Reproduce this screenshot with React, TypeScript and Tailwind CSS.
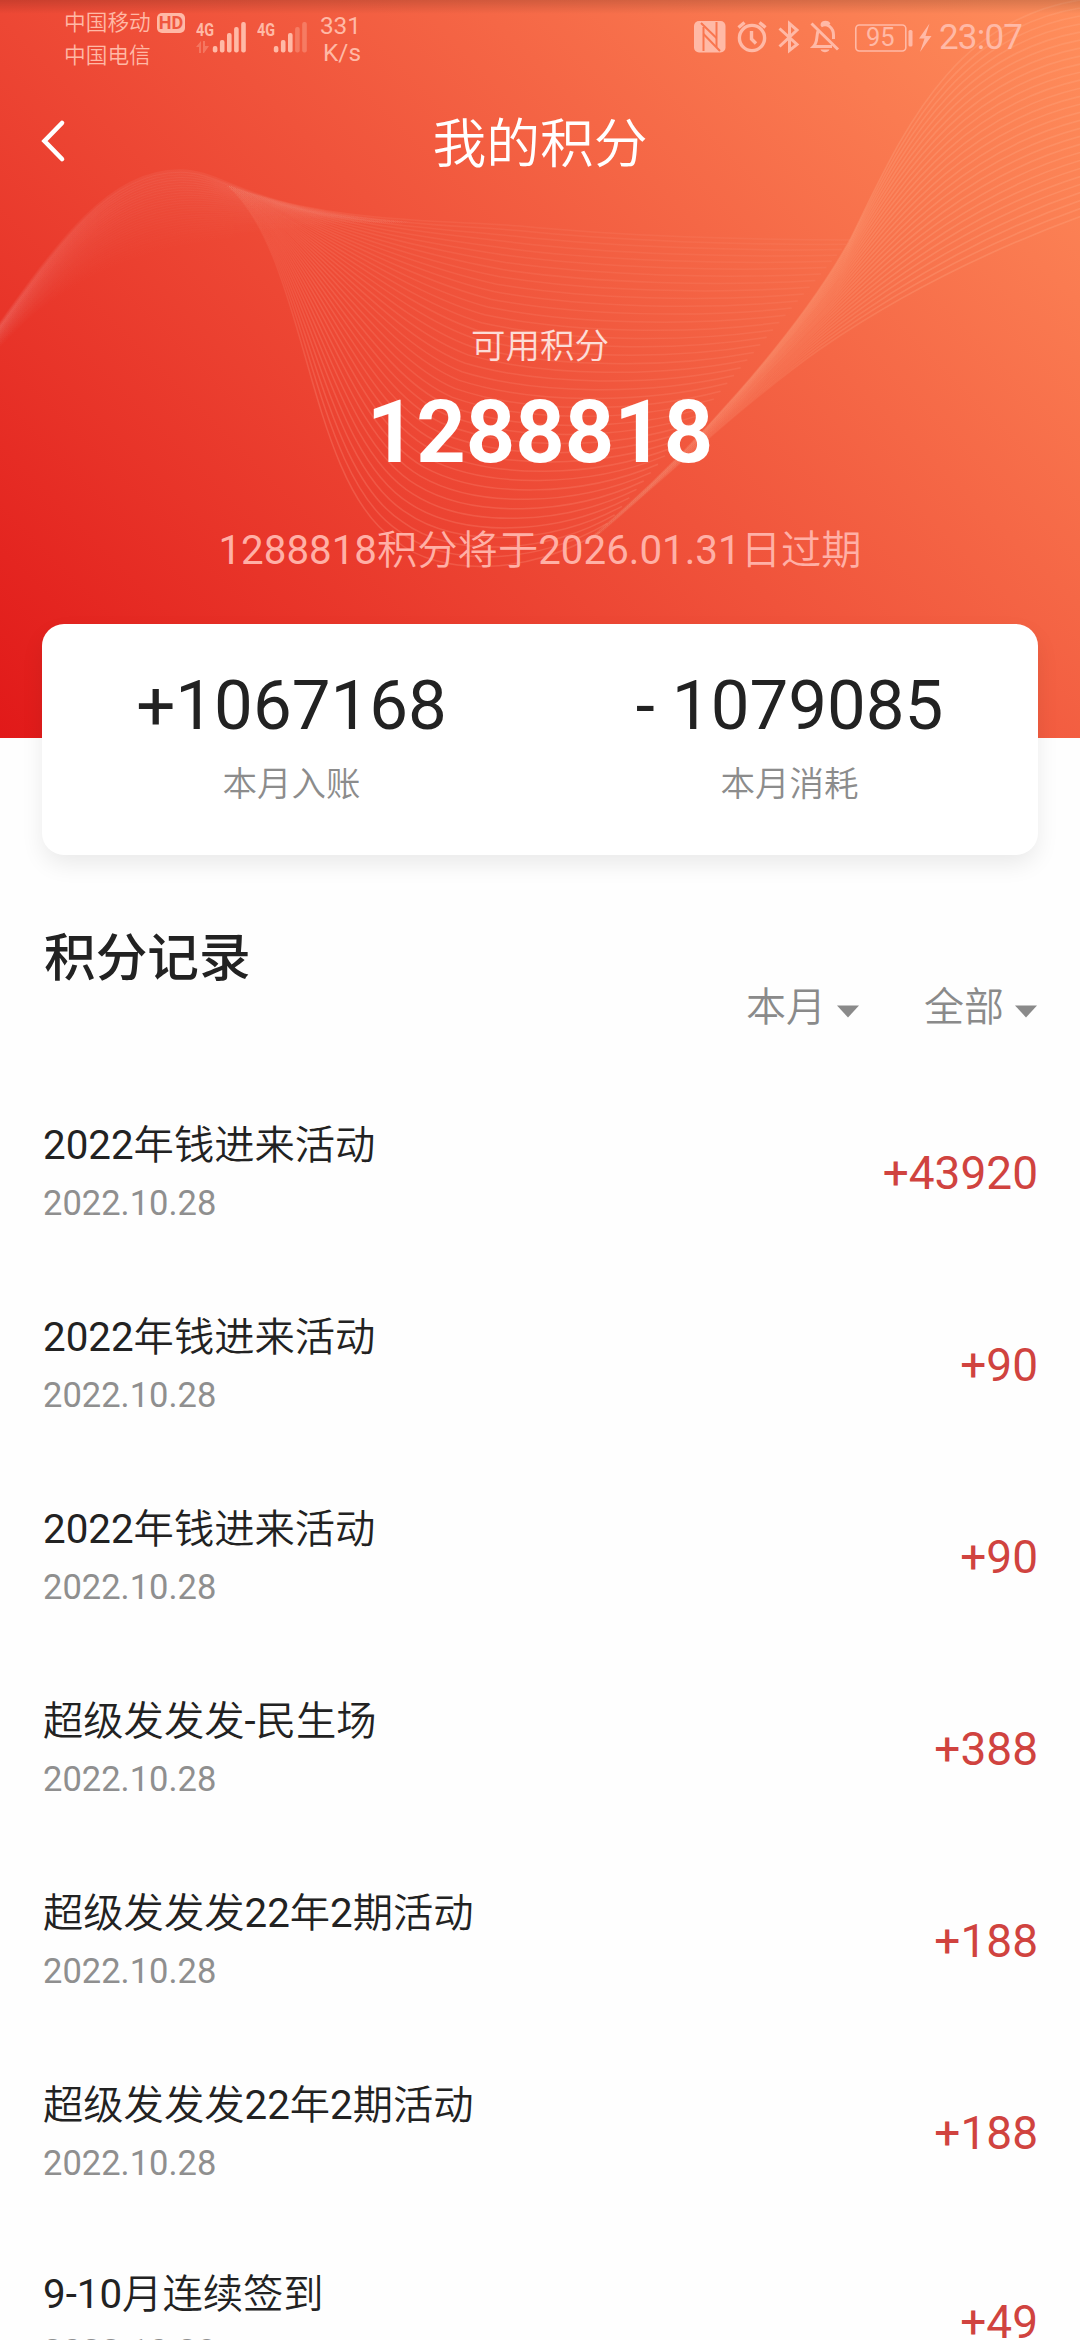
import { Fragment } from "react";

const CJK = /([\u4e00-\u9fff]+)/;

/* Chinese runs are set in a slightly lighter weight than the digits beside them. */
function Mixed({ text }: { text: string }) {
  return (
    <>
      {text.split(CJK).map((part, i) =>
        CJK.test(part) ? (
          <span key={i} className="font-[350]">
            {part}
          </span>
        ) : (
          <Fragment key={i}>{part}</Fragment>
        )
      )}
    </>
  );
}

type Curve = number[];

function blend(a: Curve, b: Curve, t: number): string {
  const p = a.map((v, i) => (v + (b[i] - v) * t).toFixed(1));
  return `M${p[0]} ${p[1]}C${p.slice(2, 8).join(" ")}C${p.slice(8, 14).join(" ")}`;
}

const SAG_TOP: Curve = [225, 184, 330, 225, 450, 220, 520, 226, 620, 236, 750, 240, 850, 240];
const SAG_BOTTOM: Curve = [225, 184, 308, 250, 305, 480, 395, 540, 440, 578, 530, 575, 600, 532];
const FAN_LEFT: Curve = [592, 536, 690, 455, 800, 330, 850, 240, 900, 140, 950, 12, 1095, -2];
const FAN_RIGHT: Curve = [592, 540, 670, 474, 750, 398, 820, 349, 900, 294, 990, 249, 1090, 213];
const CREST_TOP: Curve = [-4, 330, 60, 240, 110, 171, 180, 171, 228, 171, 250, 216, 430, 223];
const CREST_BOTTOM: Curve = [-4, 352, 60, 285, 110, 262, 180, 246, 240, 236, 330, 224, 430, 226];

const range = (n: number) => Array.from({ length: n }, (_, i) => i / (n - 1));

function Waves() {
  return (
    <svg className="absolute inset-0" width="1080" height="738" viewBox="0 0 1080 738" fill="none">
      <defs>
        <linearGradient id="crest" gradientUnits="userSpaceOnUse" x1="0" y1="0" x2="430" y2="0">
          <stop offset="0" stopColor="#fff" stopOpacity="0.5" />
          <stop offset="0.25" stopColor="#fff" stopOpacity="0.8" />
          <stop offset="0.5" stopColor="#fff" stopOpacity="0.8" />
          <stop offset="0.75" stopColor="#fff" stopOpacity="0.25" />
          <stop offset="1" stopColor="#fff" stopOpacity="0" />
        </linearGradient>
        <linearGradient id="sag" gradientUnits="userSpaceOnUse" x1="225" y1="0" x2="850" y2="0">
          <stop offset="0" stopColor="#ffa08a" stopOpacity="0" />
          <stop offset="0.06" stopColor="#ffa08a" stopOpacity="0.3" />
          <stop offset="0.15" stopColor="#ffa08a" stopOpacity="0.9" />
          <stop offset="1" stopColor="#ffa08a" stopOpacity="0.8" />
        </linearGradient>
        <linearGradient id="fan" gradientUnits="userSpaceOnUse" x1="592" y1="536" x2="900" y2="260">
          <stop offset="0" stopColor="#ffb094" stopOpacity="0.015" />
          <stop offset="0.3" stopColor="#ffb094" stopOpacity="0.05" />
          <stop offset="0.6" stopColor="#ffb08c" stopOpacity="0.14" />
          <stop offset="1" stopColor="#ffb08c" stopOpacity="0.26" />
        </linearGradient>
      </defs>
      {range(30).map((t) => (
        <path key={`c${t}`} d={blend(CREST_TOP, CREST_BOTTOM, t)} stroke="url(#crest)" strokeWidth="3.5" strokeOpacity={0.06 * (1 - t)} />
      ))}
      {range(40).map((t) => (
        <path key={`s${t}`} d={blend(SAG_TOP, SAG_BOTTOM, Math.pow(t, 1.15))} stroke="url(#sag)" strokeWidth="1.5" strokeOpacity={0.13 + 0.15 * t} />
      ))}
      {range(28).map((t) => (
        <path key={`f${t}`} d={blend(FAN_LEFT, FAN_RIGHT, t)} stroke="url(#fan)" strokeWidth="1.6" />
      ))}
    </svg>
  );
}

function Signal({ full, arrows }: { full: number; arrows?: boolean }) {
  const tops = [46, 40, 33, 27, 22];
  return (
    <svg width="52" height="75" viewBox="0 0 52 75" fill="currentColor" className="shrink-0">
      <text x="0" y="36" fontSize="19" fontWeight="700" textLength="18" lengthAdjust="spacingAndGlyphs" fontFamily="Roboto, sans-serif">
        4G
      </text>
      {arrows && <path d="M0 47L5 41V53H3V47ZM7 41H9V46H13L8 53H7Z" opacity="0.35" />}
      {tops.map((y, i) => (
        <rect key={y} x={16.8 + i * 7.1} y={y} width="4.6" height={52.5 - y} rx="2" opacity={i < full ? 1 : 0.35} />
      ))}
    </svg>
  );
}

function StatusBar() {
  return (
    <div className="flex h-[79px] items-start pl-[64px] text-[#ffb9a6]">
      <div className="w-[87px] pt-[6px] text-[21.7px] leading-[33px] whitespace-nowrap">
        <div><Mixed text="中国移动" /></div>
        <div><Mixed text="中国电信" /></div>
      </div>
      <div className="mt-[13px] ml-[6px] flex h-[20px] w-[28px] items-center justify-center rounded-[5px] bg-[#ffb9a6] text-[18px] leading-[20px] font-bold text-[#f0573f]">
        HD
      </div>
      <div className="ml-[11px] flex">
        <Signal full={5} arrows />
        <div className="w-[9px]" />
        <Signal full={3} />
      </div>
      <div className="ml-[8px] w-[44px] pt-[12px] text-right text-[24.4px] leading-[27px]">
        <div>331</div>
        <div>K/s</div>
      </div>
      <svg className="ml-[332px] shrink-0" width="245" height="75" viewBox="692 0 245 75" fill="none" stroke="currentColor" strokeWidth="3.4">
        <rect x="693" y="21" width="31.500" height="31.500" rx="5" fill="currentColor" stroke="none" />
        <path d="M702.500 27V51M715.500 22V47" stroke="#f9764f" strokeWidth="2" />
        <path d="M700 23L715.500 38M702.500 34L719 51" stroke="#f9764f" strokeWidth="2" />
        <circle cx="751" cy="38" r="12.600" />
        <path d="M750.500 31V39L755 43.500M737.500 27.500L743.500 22.500M764.500 27.500L758.500 22.500" />
        <path d="M778.500 28.500L796 44.500L788.500 50.500V23.500L796 30L778.500 46.500" strokeWidth="3" />
        <path d="M810.500 23.500L837 49.500M817 31C815 37 817 42 812.500 46.500H831M820 26C826 22 832.500 28 832.500 35V39M821 24.500C822 21.500 827 21.500 828 24.500" strokeWidth="3" />
        <path d="M819.500 49.500H828.500C827 53 821 53 819.500 49.500Z" fill="currentColor" stroke="none" />
        <rect x="854.800" y="25" width="50" height="26" rx="3.500" strokeWidth="1.600" />
        <rect x="907.500" y="30" width="4" height="16.500" rx="1.500" fill="currentColor" stroke="none" />
        <path d="M928.500 23.500L918 38.500H923.500L919 52L930.500 36H924.500Z" fill="currentColor" stroke="none" />
        <text x="865" y="46" fontSize="25.500" fill="currentColor" stroke="none" fontFamily="Roboto, sans-serif">95</text>
      </svg>
      <div className="ml-[1px] pt-[18px] text-[35px] leading-[40px] tracking-[-0.8px]">23:07</div>
    </div>
  );
}

function Summary({ value, label }: { value: string; label: string }) {
  return (
    <div className="flex flex-1 flex-col items-center pt-[42px] pl-[1px]">
      <div className="text-[69px] leading-[80px] whitespace-pre text-[#222]">{value}</div>
      <div className="mt-[18px] text-[34.500px] leading-[40px] text-[#8c8c8c]"><Mixed text={label} /></div>
    </div>
  );
}

function Filter({ label }: { label: string }) {
  return (
    <div className="flex items-center">
      <span className="text-[40px] leading-[40px] text-[#8a8a8a]"><Mixed text={label} /></span>
      <svg className="mt-[7px] ml-[11px]" width="22" height="13" viewBox="0 0 22 13" fill="#8a8a8a">
        <path d="M0 0.500H22L11 12.500Z" />
      </svg>
    </div>
  );
}

const records = [
  { title: "2022年钱进来活动", amount: "+43920" },
  { title: "2022年钱进来活动", amount: "+90" },
  { title: "2022年钱进来活动", amount: "+90" },
  { title: "超级发发发-民生场", amount: "+388" },
  { title: "超级发发发22年2期活动", amount: "+188" },
  { title: "超级发发发22年2期活动", amount: "+188" },
  { title: "9-10月连续签到", amount: "+49" },
];

export default function App() {
  return (
    <div className="h-[2340px] w-[1080px] overflow-hidden bg-[#fefefe] font-['Roboto','Noto_Sans_CJK_SC',sans-serif]">
      <header className="relative h-[738px] overflow-hidden bg-[linear-gradient(45deg,#e11919_0%,#f0533b_50%,#ff8f5c_100%)]">
        <Waves />
        <div className="absolute inset-x-0 top-0 h-[14px] bg-linear-to-b from-black/15 to-transparent" />
        <div className="relative">
          <StatusBar />
          <div className="relative flex h-[132px] items-center justify-center">
            <svg className="absolute top-[40px] left-[40px]" width="28" height="44" viewBox="0 0 28 44" fill="none" stroke="#fff" strokeWidth="4.600" strokeLinecap="round">
              <path d="M22 4L4.500 22L22 40" strokeLinejoin="miter" />
            </svg>
            <h1 className="text-[53.800px] leading-[60px] text-white"><Mixed text="我的积分" /></h1>
          </div>
          <div className="flex flex-col items-center pt-[115px]">
            <div className="text-[34.500px] leading-[40px] text-white/80"><Mixed text="可用积分" /></div>
            <div className="mt-[22px] text-[86.300px] leading-[90px] font-bold text-white">1288818</div>
            <div className="mt-[49px] text-[40.300px] leading-[48px] text-[#ffb0a6]">
              <Mixed text="1288818积分将于2026.01.31日过期" />
            </div>
          </div>
        </div>
      </header>

      <section className="relative mx-[42px] -mt-[114px] flex h-[231px] rounded-[22px] bg-white shadow-[0_10px_24px_-2px_rgba(0,0,0,0.09)]">
        <Summary value="+1067168" label="本月入账" />
        <Summary value="- 1079085" label="本月消耗" />
      </section>

      <section className="mr-[43px] ml-[44px] pt-[74px]">
        <h2 className="text-[51.700px] leading-[60px] font-medium text-[#222]">积分记录</h2>
        <div className="-mt-[1px] flex justify-end gap-[65px]">
          <Filter label="本月" />
          <Filter label="全部" />
        </div>
      </section>

      <ul className="mr-[42px] ml-[43px] mt-[49px]">
        {records.map((r, i) => (
          <li key={i} className="flex h-[192px] items-center justify-between last:-mt-[3px]">
            <div className="pt-[2px]">
              <div className="text-[40.300px] leading-[60px] text-[#222]"><Mixed text={r.title} /></div>
              <div className="-mt-[2px] text-[34.500px] leading-[58px] text-[#8f8f8f]">2022.10.28</div>
            </div>
            <div className="-mt-[1px] text-[46px] leading-[50px] text-[#d0433f]">{r.amount}</div>
          </li>
        ))}
      </ul>
    </div>
  );
}
